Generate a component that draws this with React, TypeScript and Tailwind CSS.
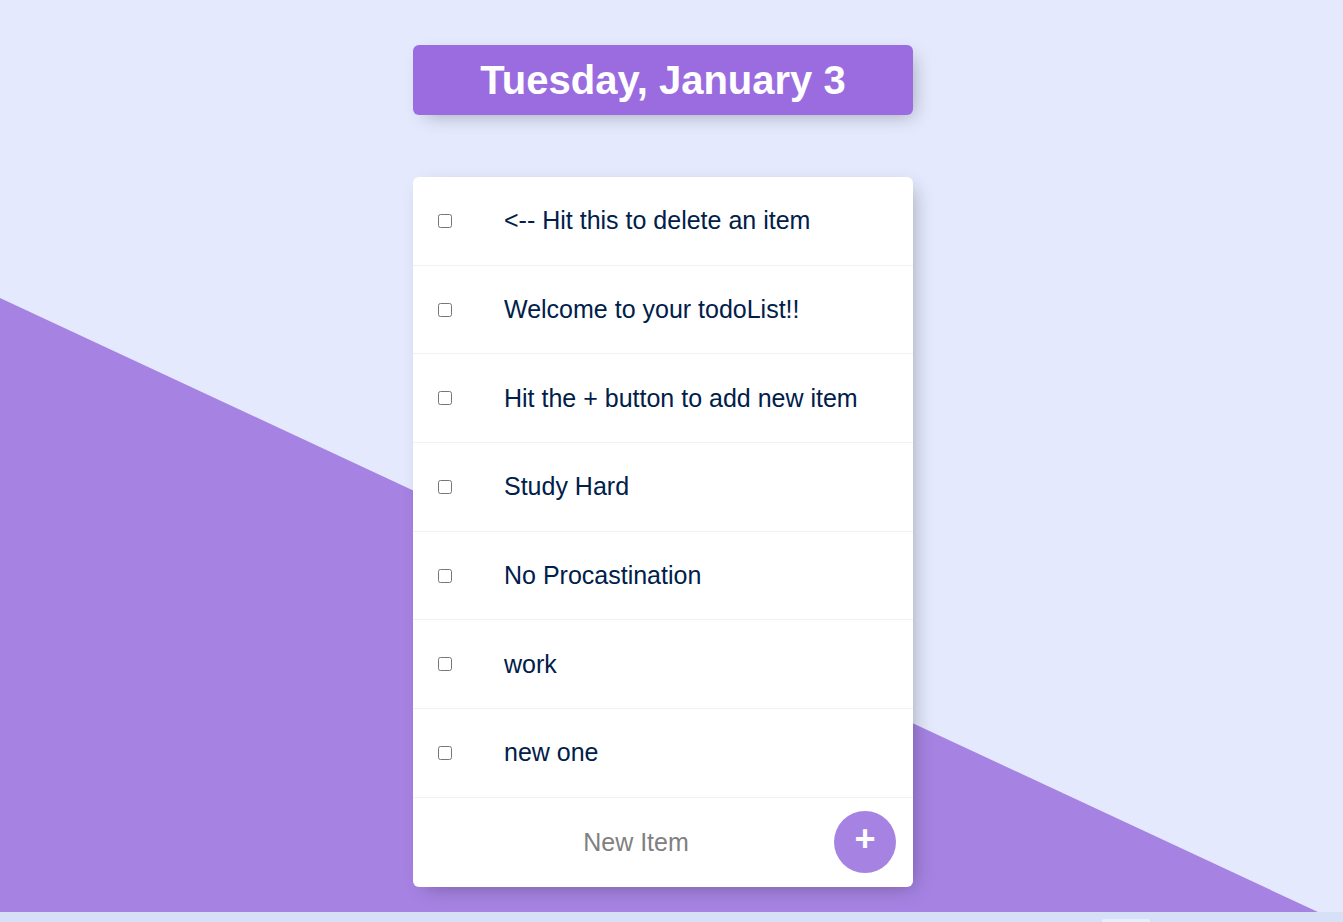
import React from 'react'

const items = [
  '<-- Hit this to delete an item',
  'Welcome to your todoList!!',
  'Hit the + button to add new item',
  'Study Hard',
  'No Procastination',
  'work',
  'new one',
]

const App = () => {
  return (
    <div className="w-[1343px] h-[922px] overflow-hidden bg-[#e4e9fd] font-['Liberation_Sans',Arial,sans-serif]">
      <div className="relative h-[912px]">
        {/* diagonal purple backdrop */}
        <div className="absolute inset-0 bg-[#a683e3] [clip-path:polygon(0_298px,1318px_912px,0_912px)]" />

        <div className="relative w-[1326px] flex flex-col items-center">
          <div className="mt-[45px] w-[500px] h-[70px] flex items-center justify-center rounded-[6px] bg-[#9b6cdf] shadow-[6px_6px_19px_-6px_rgba(0,0,0,0.3)]">
            <h1 className="text-[40px] font-bold text-white leading-none">Tuesday, January 3</h1>
          </div>

          <div className="mt-[62px] w-[500px] rounded-[6px] bg-white shadow-[6px_6px_19px_-6px_rgba(0,0,0,0.3)]">
            {items.map((text) => (
              <div key={text} className="h-[88.7px] flex items-center border-b border-[#f1f1f1]">
                <input type="checkbox" className="ml-[25px] w-[14px] h-[14px] m-0" />
                <p className="ml-[52px] text-[25px] text-[#00204a] leading-none">{text}</p>
              </div>
            ))}
            <div className="h-[88.7px] flex items-center">
              <input
                type="text"
                placeholder="New Item"
                className="ml-[25px] flex-1 min-w-0 h-[75px] text-center text-[25px] outline-none placeholder:text-[#808080] placeholder:opacity-100"
              />
              <button className="mr-[17px] w-[62px] h-[62px] rounded-full bg-[#a683e3] text-white text-[36px] font-bold leading-none pb-[7px] flex items-center justify-center">
                +
              </button>
            </div>
          </div>
        </div>
      </div>
      <div className="h-[10px] bg-[#d6e0f7] flex">
        <div className="ml-[1102px] mt-[7px] w-[48px] h-[3px] rounded-t-[2px] bg-[#e8edfb]" />
      </div>
    </div>
  )
}

export default App
